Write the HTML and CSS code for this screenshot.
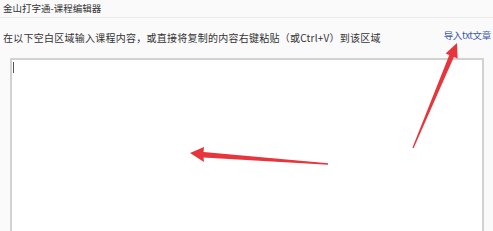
FILE: index.html
```
<!DOCTYPE html>
<html>
<head>
<meta charset="utf-8">
<link rel="stylesheet" href="styles.css">
</head>
<body>
<div class="window">
  <div class="titlebar">金山打字通-课程编辑器</div>
  <div class="toolbar">
    <span class="hint">在以下空白区域输入课程内容，或直接将复制的内容右键粘贴（或Ctrl+V）到该区域</span>
    <a class="import" href="#">导入txt文章</a>
  </div>
  <div class="editor"><span class="caret"></span></div>
  <svg class="arrows" width="493" height="231" viewBox="0 0 493 231">
    <polygon fill="#e8343b" points="457,43 457.6,58.4 453.9,56.9 413.6,148.3 412.4,147.7 449.3,54.9 445.6,53.4"/>
    <polygon fill="#e8343b" points="190,153 204,147 203.5,152 328,163.3 328,164.7 203.5,157.5 204,162"/>
  </svg>
</div>
</body>
</html>
```
FILE: styles.css
```
html, body {
  margin: 0;
  padding: 0;
  background: #fafafa;
}
.window {
  position: relative;
  width: 493px;
  height: 231px;
  overflow: hidden;
  font-family: "Noto Sans CJK SC", "Noto Sans", sans-serif;
  color: #333;
  display: flex;
  flex-direction: column;
}
.titlebar {
  height: 18px;
  box-sizing: border-box;
  padding: 2px 0 0 3px;
  font-size: 9.5px;
  line-height: 13px;
  border-bottom: 1px solid #ececec;
}
.toolbar {
  display: flex;
  justify-content: space-between;
  align-items: center;
  height: 38px;
  padding: 3px 2px 3px 3px;
  box-sizing: border-box;
  font-size: 10px;
  line-height: 13px;
}
.hint {
  color: #333;
  letter-spacing: 0.25px;
}
.import {
  color: #3b5ba8;
  text-decoration: none;
  font-size: 9.5px;
  margin-top: -3px;
  letter-spacing: -0.3px;
}
.editor {
  margin: 2px 9px 0 10px;
  flex: 1;
  background: #fff;
  border: 2px solid #d2d2d2;
  border-bottom: none;
  position: relative;
}
.caret {
  display: block;
  width: 1px;
  height: 11px;
  background: #555;
  margin: 2px 0 0 1px;
}
.arrows {
  position: absolute;
  left: 0;
  top: 0;
}
```
